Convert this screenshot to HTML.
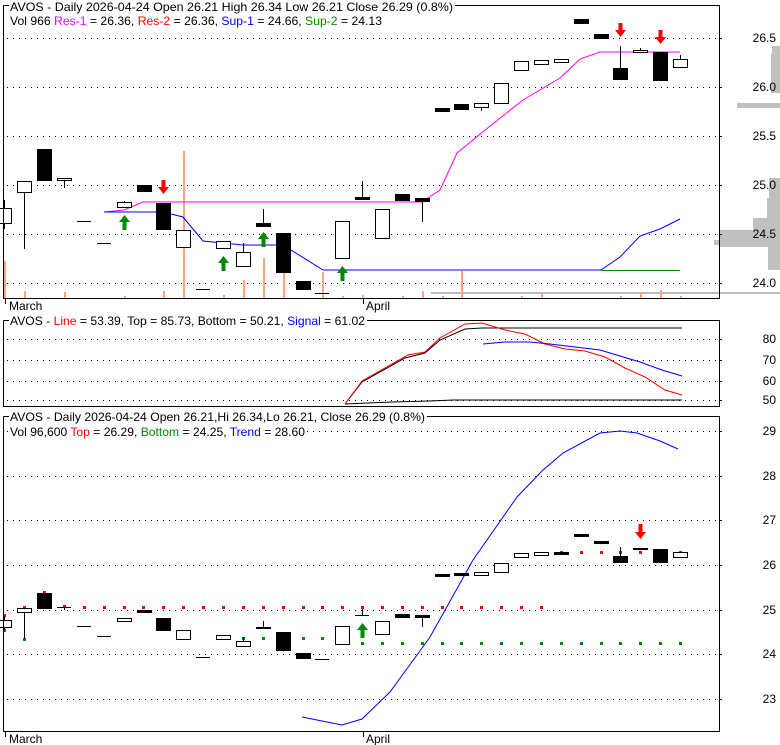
<!DOCTYPE html>
<html><head><meta charset="utf-8"><style>
html,body{margin:0;padding:0;background:#fff;}
svg{display:block;font-family:"Liberation Sans",Arial,sans-serif;font-size:12px;}
</style></head><body>
<svg width="780" height="745" viewBox="0 0 780 745" xmlns="http://www.w3.org/2000/svg">
<rect width="780" height="745" fill="#fff"/>
<!-- ========== PANEL 1 ========== -->
<g fill="#c0c0c0">
<rect x="772" y="46" width="8" height="8"/>
<rect x="771" y="54" width="9" height="39"/>
<rect x="737" y="103" width="43" height="5"/>
<rect x="769" y="178" width="11" height="20"/>
<rect x="767" y="198" width="13" height="20"/>
<rect x="753" y="218" width="27" height="12"/>
<rect x="720" y="230" width="60" height="17"/>
<rect x="714" y="240" width="6" height="5"/>
<rect x="768" y="247" width="12" height="23"/>
</g>
<rect x="431" y="292" width="349" height="2" fill="#bbb"/>
<g stroke="#000" stroke-width="1" stroke-dasharray="1,5">
<line x1="7" y1="38.5" x2="719" y2="38.5"/>
<line x1="7" y1="87.5" x2="719" y2="87.5"/>
<line x1="7" y1="136.5" x2="719" y2="136.5"/>
<line x1="7" y1="185.5" x2="719" y2="185.5"/>
<line x1="7" y1="234.5" x2="719" y2="234.5"/>
<line x1="7" y1="283.5" x2="719" y2="283.5"/>
</g>
<g stroke="#000">
<line x1="719" y1="38.5" x2="722" y2="38.5"/><line x1="719" y1="87.5" x2="722" y2="87.5"/><line x1="719" y1="136.5" x2="722" y2="136.5"/>
<line x1="719" y1="185.5" x2="722" y2="185.5"/><line x1="719" y1="234.5" x2="722" y2="234.5"/><line x1="719" y1="283.5" x2="722" y2="283.5"/>
</g>
<g fill="#f7a583">
<rect x="4" y="261" width="2" height="37"/>
<rect x="24" y="291" width="2" height="7"/>
<rect x="64" y="292" width="2" height="6"/>
<rect x="124" y="296" width="2" height="2"/>
<rect x="163" y="291" width="2" height="7"/>
<rect x="183" y="151" width="2" height="147"/>
<rect x="223" y="295" width="2" height="3"/>
<rect x="243" y="280" width="2" height="18"/>
<rect x="263" y="258" width="2" height="40"/>
<rect x="283" y="272" width="2" height="26"/>
<rect x="322" y="272" width="2" height="26"/>
<rect x="342" y="296" width="2" height="2"/>
<rect x="362" y="295" width="2" height="3"/>
<rect x="402" y="296" width="2" height="2"/>
<rect x="422" y="291" width="2" height="7"/>
<rect x="442" y="296" width="2" height="2"/>
<rect x="461" y="271" width="2" height="27"/>
<rect x="521" y="296" width="2" height="2"/>
<rect x="541" y="293" width="2" height="5"/>
<rect x="620" y="296" width="2" height="2"/>
<rect x="640" y="293" width="2" height="5"/>
<rect x="660" y="290" width="2" height="8"/>
<rect x="680" y="296" width="2" height="2"/>
</g>
<polyline fill="none" stroke="#f0f" stroke-width="1" points="104,212 124,210 143,202 422,202 440,190 457,153 490,126 523,100 560,78 580,59 600,52 680,52"/>
<polyline fill="none" stroke="#00f" stroke-width="1" points="104,212 163,212 183,217 203,241 243,245 283,245 323,270 601,270 620,257 640,236 660,229 680,219"/>
<line x1="601" y1="270.5" x2="680" y2="270.5" stroke="#080"/>
<g stroke="#000" stroke-width="1">
<line x1="4.5" y1="200" x2="4.5" y2="229"/><rect x="-2.5" y="208.5" width="14" height="15" fill="#fff"/>
<line x1="24.5" y1="181" x2="24.5" y2="249"/><rect x="17.5" y="181.5" width="14" height="11" fill="#fff"/>
<rect x="37.5" y="149.5" width="14" height="31" fill="#000"/>
<line x1="64.5" y1="178" x2="64.5" y2="188"/><rect x="57.5" y="178.5" width="14" height="2" fill="#fff"/>
<line x1="77" y1="221.5" x2="91" y2="221.5"/>
<line x1="97" y1="243.5" x2="111" y2="243.5"/>
<line x1="124.5" y1="201" x2="124.5" y2="207"/><rect x="117.5" y="202.5" width="14" height="5" fill="#fff"/>
<rect x="137.5" y="185.5" width="14" height="6" fill="#000"/>
<rect x="156.5" y="203.5" width="14" height="26" fill="#000"/>
<rect x="176.5" y="230.5" width="14" height="17" fill="#fff"/>
<line x1="196" y1="289.5" x2="210" y2="289.5"/>
<rect x="216.5" y="241.5" width="14" height="7" fill="#fff"/>
<line x1="243.5" y1="243" x2="243.5" y2="252"/><rect x="236.5" y="252.5" width="14" height="14" fill="#fff"/>
<line x1="263.5" y1="209" x2="263.5" y2="226"/><rect x="256.5" y="223.5" width="14" height="3" fill="#000"/>
<rect x="276.5" y="233.5" width="14" height="39" fill="#000"/>
<rect x="296.5" y="281.5" width="14" height="8" fill="#000"/>
<line x1="315" y1="293.5" x2="329" y2="293.5"/>
<rect x="335.5" y="221.5" width="14" height="37" fill="#fff"/>
<line x1="362.5" y1="181" x2="362.5" y2="199"/><rect x="355.5" y="197.5" width="14" height="2" fill="#000"/>
<rect x="375.5" y="209.5" width="14" height="29" fill="#fff"/>
<rect x="395.5" y="194.5" width="14" height="6" fill="#000"/>
<line x1="422.5" y1="198" x2="422.5" y2="222"/><rect x="415.5" y="198.5" width="14" height="3" fill="#000"/>
<rect x="435.5" y="108.5" width="14" height="3" fill="#000"/>
<rect x="454.5" y="104.5" width="14" height="5" fill="#000"/>
<line x1="481.5" y1="103" x2="481.5" y2="111"/><rect x="474.5" y="103.5" width="14" height="4" fill="#fff"/>
<rect x="494.5" y="83.5" width="14" height="20" fill="#fff"/>
<rect x="514.5" y="61.5" width="14" height="9" fill="#fff"/>
<rect x="534.5" y="60.5" width="14" height="4" fill="#fff"/>
<rect x="554.5" y="59.5" width="14" height="3" fill="#fff"/>
<rect x="574.5" y="19.5" width="14" height="4" fill="#000"/>
<rect x="594.5" y="34.5" width="14" height="4" fill="#000"/>
<line x1="620.5" y1="46" x2="620.5" y2="68"/><rect x="613.5" y="68.5" width="14" height="11" fill="#000"/>
<line x1="640.5" y1="48" x2="640.5" y2="52"/><rect x="633.5" y="50.5" width="14" height="2" fill="#fff"/>
<rect x="653.5" y="52.5" width="14" height="28" fill="#000"/>
<line x1="680.5" y1="55" x2="680.5" y2="59"/><rect x="673.5" y="59.5" width="14" height="8" fill="#fff"/>
</g>
<g fill="#080">
<path d="M124.5 215 L130 222 L126.5 222 L126.5 230 L122.5 230 L122.5 222 L119 222 Z"/>
<path d="M223.5 256 L229 263 L225.5 263 L225.5 271 L221.5 271 L221.5 263 L218 263 Z"/>
<path d="M263.5 232 L269 239 L265.5 239 L265.5 247 L261.5 247 L261.5 239 L258 239 Z"/>
<path d="M342.5 266 L348 273 L344.5 273 L344.5 281 L340.5 281 L340.5 273 L337 273 Z"/>
</g>
<g fill="#f00">
<path d="M163.5 194 L169 187 L165.5 187 L165.5 180 L161.5 180 L161.5 187 L158 187 Z"/>
<path d="M620.5 37 L626 30 L622.5 30 L622.5 23 L618.5 23 L618.5 30 L615 30 Z"/>
<path d="M660.5 44 L666 37 L662.5 37 L662.5 30 L658.5 30 L658.5 37 L655 37 Z"/>
</g>
<polyline fill="none" stroke="#000" points="3.5,5.5 719.5,5.5 719.5,298.5 3.5,298.5 3.5,5.5"/>
<rect x="9" y="0" width="446" height="13" fill="#fff"/>
<text x="10" y="11" textLength="443" lengthAdjust="spacingAndGlyphs">AVOS - Daily 2026-04-24 Open 26.21  High 26.34  Low 26.21  Close 26.29 (0.8%)</text>
<text x="10" y="25" textLength="372" lengthAdjust="spacingAndGlyphs">Vol 966 <tspan fill="#f0f">Res-1</tspan> = 26.36, <tspan fill="#f00">Res-2</tspan> = 26.36, <tspan fill="#00f">Sup-1</tspan> = 24.66, <tspan fill="#080">Sup-2</tspan> = 24.13</text>
<g text-anchor="end">
<text x="776" y="42">26.5</text><text x="776" y="91">26.0</text><text x="776" y="140">25.5</text>
<text x="776" y="189">25.0</text><text x="776" y="238">24.5</text><text x="776" y="287">24.0</text>
</g>
<line x1="5.5" y1="298" x2="5.5" y2="304" stroke="#000"/>
<line x1="363.5" y1="298" x2="363.5" y2="304" stroke="#000"/>
<text x="9" y="310">March</text><text x="366" y="310">April</text>

<!-- ========== PANEL 2 ========== -->
<g stroke="#000" stroke-dasharray="1,5">
<line x1="7" y1="339.5" x2="719" y2="339.5"/>
<line x1="7" y1="360.5" x2="719" y2="360.5"/>
<line x1="7" y1="381.5" x2="719" y2="381.5"/>
<line x1="7" y1="400.5" x2="719" y2="400.5"/>
</g>
<g stroke="#000">
<line x1="719" y1="339.5" x2="722" y2="339.5"/><line x1="719" y1="360.5" x2="722" y2="360.5"/><line x1="719" y1="381.5" x2="722" y2="381.5"/><line x1="719" y1="400.5" x2="722" y2="400.5"/>
</g>
<polyline fill="none" stroke="#000" points="345,404 392,402 430,401 453,400 682,400"/>
<polyline fill="none" stroke="#000" points="345,404 362,382 405,358 425,353 440,340 465,329 482,328 682,328"/>
<polyline fill="none" stroke="#f00" points="345,404 362,381 408,355 425,352 440,338 465,324 482,323 505,330 525,334 545,344 565,349 585,351 605,357 625,368 645,377 665,390 682,395"/>
<polyline fill="none" stroke="#00f" points="483,344 505,342 530,342 550,344 575,347 600,350 620,356 640,362 662,370 682,376"/>
<polyline fill="none" stroke="#000" points="3.5,320.5 719.5,320.5 719.5,406.5 3.5,406.5 3.5,320.5"/>
<rect x="9" y="314" width="358" height="13" fill="#fff"/>
<text x="10" y="325" textLength="355" lengthAdjust="spacingAndGlyphs">AVOS - <tspan fill="#f00">Line</tspan> = 53.39, Top = 85.73, Bottom = 50.21, <tspan fill="#00f">Signal</tspan> = 61.02</text>
<g text-anchor="end">
<text x="776" y="343">80</text><text x="776" y="364">70</text><text x="776" y="385">60</text><text x="776" y="404">50</text>
</g>

<!-- ========== PANEL 3 ========== -->
<g stroke="#000" stroke-dasharray="1,5">
<line x1="7" y1="431.5" x2="719" y2="431.5"/>
<line x1="7" y1="476.5" x2="719" y2="476.5"/>
<line x1="7" y1="520.5" x2="719" y2="520.5"/>
<line x1="7" y1="565.5" x2="719" y2="565.5"/>
<line x1="7" y1="610.5" x2="719" y2="610.5"/>
<line x1="7" y1="654.5" x2="719" y2="654.5"/>
<line x1="7" y1="699.5" x2="719" y2="699.5"/>
</g>
<g stroke="#000">
<line x1="719" y1="431.5" x2="722" y2="431.5"/><line x1="719" y1="476.5" x2="722" y2="476.5"/><line x1="719" y1="520.5" x2="722" y2="520.5"/><line x1="719" y1="565.5" x2="722" y2="565.5"/>
<line x1="719" y1="610.5" x2="722" y2="610.5"/><line x1="719" y1="654.5" x2="722" y2="654.5"/><line x1="719" y1="699.5" x2="722" y2="699.5"/>
</g>
<polyline fill="none" stroke="#00f" points="302,717 342,725 362,719 390,692 430,637 473,560 517,497 543,470 563,453 600,433 620,431 637,433 660,441 678,449"/>
<g fill="#f00">
<rect x="3" y="614" width="3" height="3"/><rect x="23" y="606" width="3" height="3"/><rect x="43" y="591" width="3" height="3"/><rect x="63" y="605" width="3" height="3"/>
<rect x="83" y="606" width="3" height="3"/><rect x="103" y="606" width="3" height="3"/><rect x="123" y="606" width="3" height="3"/><rect x="142" y="606" width="3" height="3"/>
<rect x="162" y="606" width="3" height="3"/><rect x="182" y="606" width="3" height="3"/><rect x="202" y="606" width="3" height="3"/><rect x="222" y="606" width="3" height="3"/>
<rect x="242" y="606" width="3" height="3"/><rect x="262" y="606" width="3" height="3"/><rect x="282" y="606" width="3" height="3"/><rect x="302" y="606" width="3" height="3"/>
<rect x="321" y="606" width="3" height="3"/><rect x="341" y="606" width="3" height="3"/><rect x="361" y="606" width="3" height="3"/><rect x="381" y="606" width="3" height="3"/>
<rect x="401" y="606" width="3" height="3"/><rect x="421" y="606" width="3" height="3"/><rect x="441" y="606" width="3" height="3"/><rect x="460" y="606" width="3" height="3"/>
<rect x="480" y="606" width="3" height="3"/><rect x="500" y="606" width="3" height="3"/><rect x="520" y="606" width="3" height="3"/><rect x="540" y="606" width="3" height="3"/>
<rect x="560" y="551" width="3" height="3"/><rect x="580" y="551" width="3" height="3"/><rect x="600" y="551" width="3" height="3"/><rect x="619" y="551" width="3" height="3"/><rect x="639" y="551" width="3" height="3"/><rect x="679" y="551" width="3" height="2"/>
</g>
<g fill="#080">
<rect x="3" y="629" width="3" height="3"/><rect x="23" y="638" width="3" height="3"/><rect x="43" y="607" width="3" height="2"/>
<rect x="222" y="637" width="3" height="3"/><rect x="242" y="637" width="3" height="3"/><rect x="262" y="637" width="3" height="3"/><rect x="302" y="637" width="3" height="3"/><rect x="321" y="637" width="3" height="3"/>
<rect x="341" y="642" width="3" height="3"/><rect x="361" y="642" width="3" height="3"/><rect x="381" y="642" width="3" height="3"/><rect x="401" y="642" width="3" height="3"/><rect x="421" y="642" width="3" height="3"/><rect x="441" y="642" width="3" height="3"/><rect x="460" y="642" width="3" height="3"/>
<rect x="480" y="642" width="3" height="3"/><rect x="500" y="642" width="3" height="3"/><rect x="520" y="642" width="3" height="3"/><rect x="540" y="642" width="3" height="3"/><rect x="560" y="642" width="3" height="3"/><rect x="580" y="642" width="3" height="3"/><rect x="600" y="642" width="3" height="3"/>
<rect x="619" y="642" width="3" height="3"/><rect x="639" y="642" width="3" height="3"/><rect x="659" y="642" width="3" height="3"/><rect x="679" y="642" width="3" height="3"/>
</g>
<g stroke="#000">
<line x1="4.5" y1="616" x2="4.5" y2="630"/><rect x="-2.5" y="620.5" width="14" height="7" fill="#fff"/>
<line x1="24.5" y1="608" x2="24.5" y2="639"/><rect x="17.5" y="608.5" width="14" height="4" fill="#fff"/>
<rect x="37.5" y="593.5" width="14" height="15" fill="#000"/>
<line x1="64.5" y1="607" x2="64.5" y2="610"/><line x1="57" y1="607.5" x2="71" y2="607.5"/>
<line x1="77" y1="626.5" x2="91" y2="626.5"/>
<line x1="97" y1="636.5" x2="111" y2="636.5"/>
<rect x="117.5" y="618.5" width="14" height="3" fill="#fff"/>
<rect x="137.5" y="610.5" width="14" height="2" fill="#000"/>
<rect x="156.5" y="618.5" width="14" height="12" fill="#000"/>
<rect x="176.5" y="630.5" width="14" height="9" fill="#fff"/>
<line x1="196" y1="657.5" x2="210" y2="657.5"/>
<rect x="216.5" y="635.5" width="14" height="4" fill="#fff"/>
<line x1="243.5" y1="637" x2="243.5" y2="641"/><rect x="236.5" y="641.5" width="14" height="5" fill="#fff"/>
<line x1="263.5" y1="621" x2="263.5" y2="628"/><rect x="256.5" y="627.5" width="14" height="1" fill="#000"/>
<rect x="276.5" y="632.5" width="14" height="18" fill="#000"/>
<rect x="296.5" y="653.5" width="14" height="5" fill="#000"/>
<line x1="315" y1="659.5" x2="329" y2="659.5"/>
<rect x="335.5" y="626.5" width="14" height="18" fill="#fff"/>
<line x1="362.5" y1="609" x2="362.5" y2="615"/><line x1="355" y1="615.5" x2="369" y2="615.5"/>
<rect x="375.5" y="621.5" width="14" height="13" fill="#fff"/>
<rect x="395.5" y="614.5" width="14" height="3" fill="#000"/>
<line x1="422.5" y1="615" x2="422.5" y2="627"/><rect x="415.5" y="615.5" width="14" height="2" fill="#000"/>
<rect x="435.5" y="574.5" width="14" height="2" fill="#000"/>
<rect x="454.5" y="573.5" width="14" height="2" fill="#000"/>
<rect x="474.5" y="572.5" width="14" height="3" fill="#fff"/>
<rect x="494.5" y="563.5" width="14" height="9" fill="#fff"/>
<rect x="514.5" y="553.5" width="14" height="4" fill="#fff"/>
<rect x="534.5" y="552.5" width="14" height="3" fill="#fff"/>
<rect x="554.5" y="552.5" width="14" height="2" fill="#000"/>
<rect x="574.5" y="534.5" width="14" height="2" fill="#000"/>
<rect x="594.5" y="541.5" width="14" height="2" fill="#000"/>
<line x1="620.5" y1="547" x2="620.5" y2="556"/><rect x="613.5" y="556.5" width="14" height="6" fill="#000"/>
<rect x="633.5" y="548.5" width="14" height="1" fill="#000"/>
<rect x="653.5" y="549.5" width="14" height="13" fill="#000"/>
<rect x="673.5" y="552.5" width="14" height="5" fill="#fff"/>
</g>
<path fill="#080" d="M362.5 623 L368 630 L364.5 630 L364.5 638 L360.5 638 L360.5 630 L357 630 Z"/>
<path fill="#f00" d="M640.5 539 L646 532 L642.5 532 L642.5 524 L638.5 524 L638.5 532 L635 532 Z"/>
<polyline fill="none" stroke="#000" points="3.5,416.5 719.5,416.5 719.5,731.5 3.5,731.5 3.5,416.5"/>
<rect x="9" y="410" width="418" height="13" fill="#fff"/>
<text x="10" y="421" textLength="415" lengthAdjust="spacingAndGlyphs">AVOS - Daily 2026-04-24 Open 26.21,Hi 26.34,Lo 26.21, Close 26.29 (0.8%)</text>
<rect x="9" y="426" width="298" height="12" fill="#fff"/>
<text x="10" y="436" textLength="295" lengthAdjust="spacingAndGlyphs">Vol 96,600 <tspan fill="#f00">Top</tspan> = 26.29, <tspan fill="#080">Bottom</tspan> = 24.25, <tspan fill="#00f">Trend</tspan> = 28.60</text>
<g text-anchor="end">
<text x="776" y="435">29</text><text x="776" y="480">28</text><text x="776" y="524">27</text><text x="776" y="569">26</text>
<text x="776" y="614">25</text><text x="776" y="658">24</text><text x="776" y="703">23</text>
</g>
<line x1="5.5" y1="731" x2="5.5" y2="737" stroke="#000"/>
<line x1="363.5" y1="731" x2="363.5" y2="737" stroke="#000"/>
<text x="9" y="743">March</text><text x="366" y="743">April</text>
</svg>
</body></html>
